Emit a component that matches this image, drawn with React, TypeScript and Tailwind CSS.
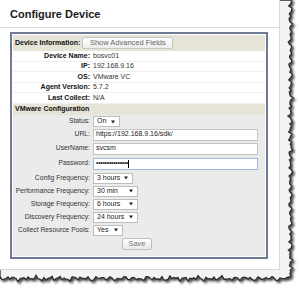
import React from 'react';

const font = { fontFamily: '"Liberation Sans", Arial, sans-serif' };

// deterministic wobble for the torn paper edge
const jag = (i: number, amp: number) =>
  amp * (Math.sin(i * 1.7) * 0.45 + Math.sin(i * 3.1 + 1) * 0.3 + Math.sin(i * 7.3 + 2) * 0.3 + Math.sin(i * 13.1) * 0.2);

const tornPath = () => {
  const pts: string[] = ['0,0', '291,0'];
  for (let y = 0; y <= 279; y += 2) pts.push(`${(290.5 + jag(y / 2, 2.4)).toFixed(1)},${y}`);
  for (let x = 288; x >= 0; x -= 2) pts.push(`${x},${(278.5 + jag(x / 2 + 40, 2.8)).toFixed(1)}`);
  pts.push('0,279');
  return 'M' + pts.join(' L') + ' Z';
};

const Arrow = () => (
  <svg width="4" height="4" viewBox="0 0 4 4" className="shrink-0">
    <path d="M0 0.5 H4 L2 3.5 Z" fill="#222" />
  </svg>
);

const Select: React.FC<{ value: string; w: string }> = ({ value, w }) => (
  <div className={`${w} h-[11px] bg-white border border-[#bdbdbd] flex items-center justify-between pl-[3px] pr-[4px] text-[7px] text-[#222]`}>
    <span>{value}</span>
    <Arrow />
  </div>
);

const Input: React.FC<{ value: string }> = ({ value }) => (
  <div className="w-[165px] h-[12px] bg-white border border-[#c4c4c4] flex items-center pl-[2px] text-[7px] text-[#222]">
    {value}
  </div>
);

const info = [
  ['Device Name:', 'bosvc01'],
  ['IP:', '192.168.9.16'],
  ['OS:', 'VMware VC'],
  ['Agent Version:', '5.7.2'],
  ['Last Collect:', 'N/A'],
];

const Row: React.FC<{ label: string; h: string; children: React.ReactNode }> = ({ label, h, children }) => (
  <div className={`flex items-center ${h}`}>
    <div className="w-[77px] text-right text-[6.75px] text-[#333] whitespace-nowrap">{label}</div>
    <div className="ml-[3px] flex items-center">{children}</div>
  </div>
);

export default function App() {
  return (
    <div className="relative w-[300px] h-[289px] bg-white overflow-hidden" style={font}>
      <svg className="absolute inset-0" width="300" height="289" viewBox="0 0 300 289">
        <defs>
          <filter id="sh" x="-10%" y="-10%" width="130%" height="130%">
            <feDropShadow dx="1.8" dy="1.8" stdDeviation="1.2" floodColor="#000" floodOpacity="0.7" />
          </filter>
        </defs>
        <path d={tornPath()} fill="#f3f3f1" stroke="#2e2e2e" strokeWidth="1.3" filter="url(#sh)" />
      </svg>

      <div className="relative w-[280px] h-[270px] bg-white border-r border-b border-[#d9d9d9]">
        <div className="h-[28px] border-b border-[#dcdcdc] flex items-center pl-[10px] pt-[1px]">
          <h1 className="text-[11px] font-bold text-[#1a1a1a]">Configure Device</h1>
        </div>

        <div className="ml-[10px] mt-[4px] w-[258px] h-[227px] border-2 border-[#6f7a96] bg-white p-[1px] flex flex-col">
          <div className="h-[16px] shrink-0 bg-[#e6e4d7] flex items-center pl-[2px]">
            <span className="text-[7px] font-bold text-[#111]">Device Information:</span>
            <button className="ml-[2px] h-[12px] w-[91px] border border-[#c6c6c6] rounded-[2px] bg-gradient-to-b from-white to-[#ececec] text-[7.5px] text-[#666] leading-none">
              Show Advanced Fields
            </button>
          </div>

          {info.map(([k, v]) => (
            <div key={k} className="h-[10.5px] shrink-0 flex items-center border-b border-[#efefef]">
              <div className="w-[77px] text-right text-[7px] font-bold text-[#111]">{k}</div>
              <div className="ml-[3px] text-[7px] text-[#333]">{v}</div>
            </div>
          ))}

          <div className="h-[11.5px] shrink-0 bg-[#e6e4d7] flex items-center pl-[2px]">
            <span className="text-[7px] font-bold text-[#111]">VMware Configuration</span>
          </div>

          <div className="flex-1 bg-[#ebebeb]">
            <Row label="Status:" h="h-[13px]"><Select value="On" w="w-[27px]" /></Row>
            <Row label="URL:" h="h-[13px]"><Input value="https://192.168.9.16/sdk/" /></Row>
            <Row label="UserName:" h="h-[15px]"><Input value="svcsm" /></Row>
            <Row label="Password:" h="h-[15px]">
              <div className="w-[165px] h-[12px] bg-white border border-[#9fb8e2] flex items-center pl-[2px] text-[7px] text-[#222]">
                <span className="tracking-[-0.3px]">•••••••••••••••</span>
                <span className="w-px h-[8px] bg-black" />
              </div>
            </Row>
            <Row label="Config Frequency:" h="h-[14px]"><Select value="3 hours" w="w-[40px]" /></Row>
            <Row label="Performance Frequency:" h="h-[12px]"><Select value="30 min" w="w-[45px]" /></Row>
            <Row label="Storage Frequency:" h="h-[14px]"><Select value="6 hours" w="w-[45px]" /></Row>
            <Row label="Discovery Frequency:" h="h-[12px]"><Select value="24 hours" w="w-[45px]" /></Row>
            <Row label="Collect Resource Pools:" h="h-[14px]"><Select value="Yes" w="w-[30px]" /></Row>
            <div className="h-[14px] flex items-center pl-[109px]">
              <button className="h-[12px] w-[30px] border border-[#bdbdbd] rounded-[2px] bg-gradient-to-b from-white to-[#e9e9e9] text-[7.5px] text-[#777] leading-none">
                Save
              </button>
            </div>
          </div>
        </div>
      </div>
    </div>
  );
}
